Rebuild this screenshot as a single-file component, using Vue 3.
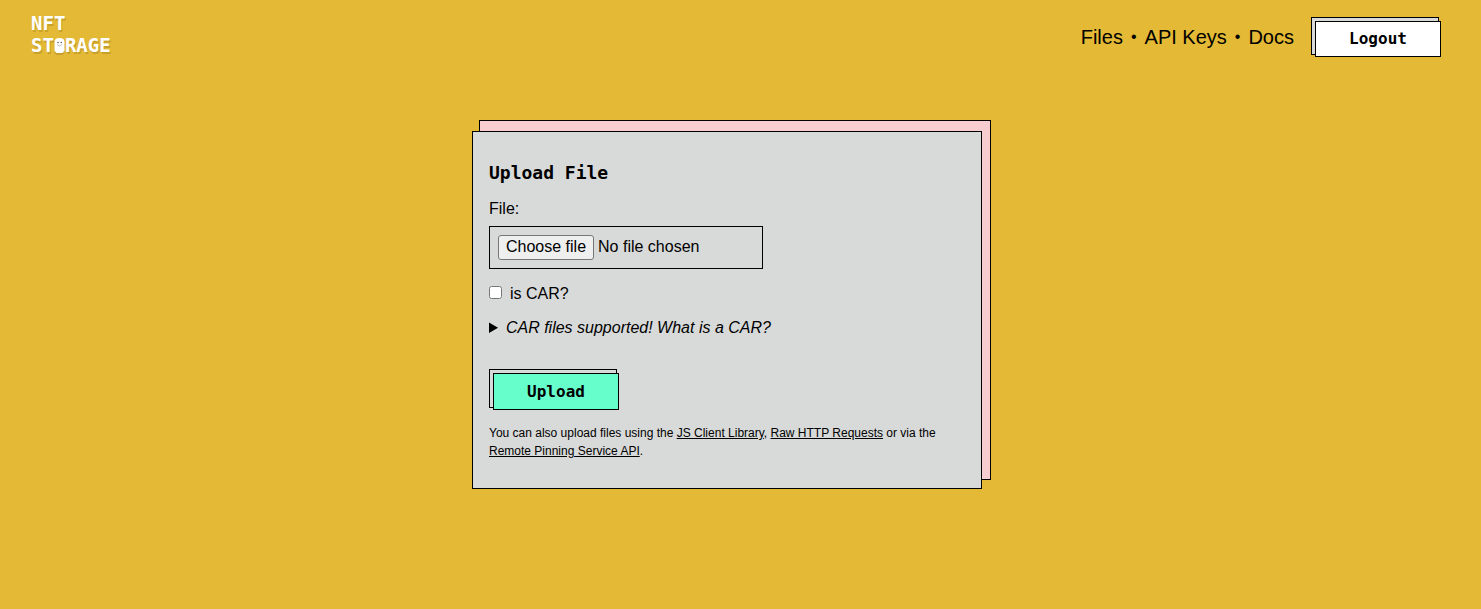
<script setup>
import { ref } from 'vue'

const fileName = ref('')
const isCar = ref(false)

function onPick(event) {
  const file = event.target.files[0]
  fileName.value = file ? file.name : ''
}
</script>

<template>
  <div class="page">
    <header class="bar">
      <a class="logo" href="#" aria-label="NFT Storage">
        <span>NFT</span>
        <span>ST<svg class="ghost" viewBox="0 0 11 15" aria-hidden="true">
          <path class="ghost-shade" d="M0.500 6Q0.500 2 5.500 2Q10.500 2 10.500 6V15L8.500 17H2.500L0.500 15Z" />
          <path d="M0.500 4Q0.500 0 5.500 0Q10.500 0 10.500 4V13L8.500 15H2.500L0.500 13Z" fill="#fff" />
          <circle cx="4" cy="4.500" r=".7" fill="#444" />
          <circle cx="7.200" cy="4.500" r=".7" fill="#444" />
          <path d="M3 6.500Q5.500 9.500 8 6.500" fill="none" stroke="#999" stroke-width=".6" />
        </svg>RAGE</span>
      </a>
      <nav class="nav">
        <a href="#files">Files</a>
        <span class="dot">•</span>
        <a href="#keys">API Keys</a>
        <span class="dot">•</span>
        <a href="#docs">Docs</a>
        <button class="btn logout" type="button"><span>Logout</span></button>
      </nav>
    </header>

    <main class="main">
      <form class="card" @submit.prevent>
        <h1>Upload File</h1>
        <label class="field-label" for="file">File:</label>
        <div class="picker">
          <span class="choose">Choose file</span>
          <span>{{ fileName || 'No file chosen' }}</span>
          <input id="file" type="file" @change="onPick" />
        </div>
        <div class="check">
          <input id="is-car" v-model="isCar" type="checkbox" />
          <label for="is-car">is CAR?</label>
        </div>
        <details>
          <summary>CAR files supported! What is a CAR?</summary>
        </details>
        <button class="btn upload" type="submit"><span>Upload</span></button>
        <p>
          You can also upload files using the <a href="#js">JS Client Library</a>,
          <a href="#http">Raw HTTP Requests</a> or via the
          <a href="#pinning">Remote Pinning Service API</a>.
        </p>
      </form>
    </main>
  </div>
</template>

<style>
body {
  margin: 0;
  background: #e3b935;
}
</style>

<style scoped>
* {
  box-sizing: border-box;
}

.page {
  min-height: 100vh;
  background: #e3b935;
  color: #000;
  font: 16px/24px "Liberation Sans", Arial, sans-serif;
}

.bar {
  display: flex;
  justify-content: space-between;
  align-items: flex-start;
  padding: 12px 42px 0 31px;
}

.logo {
  display: grid;
  color: #fff;
  font: bold 19px/22px "DejaVu Sans Mono", monospace;
  text-decoration: none;
  text-shadow: 1px 2px 0 #c9a02c;
}

.ghost {
  width: 11px;
  height: 15px;
  overflow: visible;
  vertical-align: -1px;
}

.ghost-shade {
  fill: #c9a02c;
}

.nav {
  display: flex;
  align-items: center;
  padding-top: 5px;
  font-size: 20px;
  line-height: 26px;
}

.nav a {
  padding-top: 2px;
  color: #000;
  text-decoration: none;
}

.dot {
  margin: 0 8px;
  padding-top: 2px;
  font-size: 16px;
}

.btn {
  display: block;
  width: 128px;
  padding: 0;
  border: 1px solid #000;
  background: #d8dad9;
  color: #000;
  font: bold 16px/34px "DejaVu Sans Mono", monospace;
  cursor: pointer;
}

.btn span {
  display: block;
  margin: 3px -3px -3px 3px;
  border: 1px solid #000;
}

.logout {
  height: 38px;
  margin-left: 17px;
}

.logout span {
  background: #fff;
}

.upload {
  height: 39px;
  margin-top: 29px;
  line-height: 35px;
}

.upload span {
  background: #6fc;
}

.main {
  display: flex;
  justify-content: center;
  padding: 75px 27px 40px 0;
}

.card {
  position: relative;
  width: 100%;
  max-width: 510px;
  padding: 25px 16px 28px;
  border: 1px solid #000;
  background: #d8dad9;
}

.page,
.main {
  isolation: isolate;
}

.card::before {
  content: "";
  position: absolute;
  z-index: -1;
  inset: -12px -10px 8px 6px;
  border: 1px solid #000;
  background: #f7cdcf;
}

h1 {
  margin: 0 0 8px;
  font: bold 18px/32px "DejaVu Sans Mono", monospace;
}

.field-label {
  display: block;
}

.picker {
  position: relative;
  display: flex;
  align-items: center;
  gap: 4px;
  width: 274px;
  max-width: 100%;
  margin-top: 5px;
  padding: 8px;
  border: 1px solid #000;
}

.picker input {
  position: absolute;
  inset: 0;
  width: 100%;
  opacity: 0;
}

.picker span {
  line-height: 21px;
  padding-bottom: 2px;
}

.picker .choose {
  padding: 0 7px 2px;
  border: 1px solid #767676;
  border-radius: 3px;
  background: #efefef;
}

.check {
  display: flex;
  align-items: center;
  gap: 8px;
  margin-top: 13px;
}

.check input {
  width: 13px;
  height: 13px;
  margin: 0 0 3px;
}

details {
  margin-top: 10px;
}

summary {
  font-style: italic;
}

p {
  margin: 16px 0 0;
  font-size: 12px;
  line-height: 18px;
}

p a {
  color: #000;
}
</style>
